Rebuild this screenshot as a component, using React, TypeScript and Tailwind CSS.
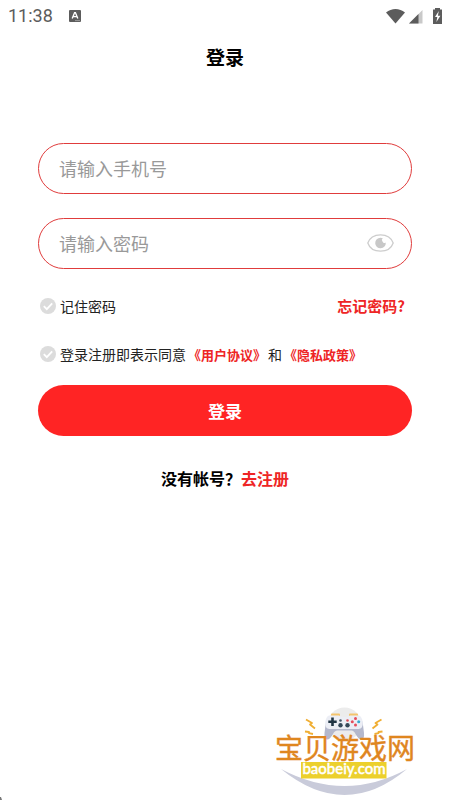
import React, { useState } from 'react';

function StatusBar() {
  return (
    <header className="flex h-8 items-center justify-between px-2 text-[#5c5c5c]">
      <div className="flex items-center gap-4">
        <time className="font-['Roboto',sans-serif] text-lg leading-8">11:38</time>
        <svg className="h-3 w-3" viewBox="0 0 12 12" aria-hidden="true">
          <rect width="12" height="12" rx="1" fill="#5c5c5c" />
          <path d="M3.2 8.4 5.6 2.6h.8l2.4 5.8M4.1 6.6h3.8" fill="none" stroke="#fff" strokeWidth="1.4" />
          <path d="M6 10.6h5" stroke="#aaa" strokeWidth=".8" />
        </svg>
      </div>
      <svg className="h-[18px] w-[57px]" viewBox="0 0 57 18" aria-hidden="true">
        <path d="M1 5.4C6.5.7 14.5.7 20 5.4L10.5 16.5Z" fill="#5c5c5c" />
        <path d="M24 16.5 37.5 3v13.5Z" fill="#c9c9c9" />
        <path d="M24 16.5 33.5 7v9.5Z" fill="#5c5c5c" />
        <path d="M50 1h5v1.5h2V17h-9V2.5h2Z" fill="#5c5c5c" />
        <path d="m53.8 4-3.8 6h2.3l-.9 5 4-6.3h-2.5Z" fill="#fff" />
      </svg>
    </header>
  );
}

function EyeIcon() {
  return (
    <svg className="h-[18px] w-[27px]" viewBox="0 0 27 18" aria-hidden="true">
      <path
        d="M.8 9C2.6 3.8 7.5.8 13.5.8S24.4 3.800 26.2 9c-1.800 5.200-6.700 8.200-12.700 8.200S2.600 14.200.8 9Z"
        fill="none"
        stroke="#cdcdcd"
        strokeWidth="1.3"
      />
      <path d="M13.5 3.7a5.300 5.300 0 1 0 5.300 4.900 2.300 2.300 0 0 1-3.300-1 2.300 2.300 0 0 1 .3-3.300 5.300 5.300 0 0 0-2.300-.6Z" fill="#c8c8c8" />
    </svg>
  );
}

function RoundCheck({ id }: { id: string }) {
  return (
    <span className="grid h-4 w-4 shrink-0 place-items-center">
      <input
        id={id}
        type="checkbox"
        className="col-start-1 row-start-1 h-4 w-4 appearance-none rounded-full bg-[#dcdcdc] checked:bg-[#ff2424]"
      />
      <svg className="pointer-events-none col-start-1 row-start-1 h-4 w-4" viewBox="0 0 16 16" aria-hidden="true">
        <path d="m3.8 8.2 3 3 5.400-5.800" fill="none" stroke="#fff" strokeWidth="1.8" />
      </svg>
    </span>
  );
}

function SiteLogo() {
  return (
    <svg className="absolute right-7 bottom-0 h-[96px] w-[150px]" viewBox="272 704 150 96" role="img" aria-label="宝贝游戏网">
      <path d="M281 769Q345 821 407 769Q345 803 281 769Z" fill="#c9cbda" />
      <circle cx="344.5" cy="724" r="16.5" fill="#ececec" />
      <path
        d="M330 717h29q3 1 4 8l1 8q.5 6-2.500 6.500-3 0-6-5.500-1.500-3.500-4-3.500h-14q-3 0-4.500 3.500-3 5.500-6 5.500-3-.5-2.500-6.500l1-8q1-7 4.500-8Z"
        fill="#b4b8cc"
      />
      <path d="M331 716.5v-2q0-1 1-1h7q1 0 1 1v2ZM349 716.5v-2q0-1 1-1h7q1 0 1 1v2Z" fill="#f4c46c" />
      <path
        d="M330 715.5h9q2 1.500 5.500 1.500t5.500-1.500h9q3 1 3.800 7 .4 6-4.300 6.500h-29q-4.700-.5-4.300-6.500.8-6 3.800-7Z"
        fill="#eceef5"
      />
      <path d="M331.2 717.5h2.600v2.900h2.900v2.600h-2.900v2.900h-2.600V723h-2.900v-2.600h2.900Z" fill="#203544" />
      <circle cx="340.5" cy="720.5" r="1.3" fill="#455666" />
      <circle cx="347.5" cy="720.5" r="1.3" fill="#dc4c56" />
      <circle cx="340.5" cy="725.3" r="2.2" fill="#344858" />
      <circle cx="347.5" cy="725.3" r="2.2" fill="#344858" />
      <circle cx="355.5" cy="718.5" r="1.5" fill="#e64d5c" />
      <circle cx="355.5" cy="725" r="1.5" fill="#e64d5c" />
      <circle cx="352.3" cy="721.8" r="1.5" fill="#e64d5c" />
      <circle cx="358.7" cy="721.8" r="1.5" fill="#38a9cf" />
      <g fill="none" stroke="#f0ae32" strokeWidth="1.8" strokeLinejoin="round">
        <path d="m306 719.5 6 3.500-2 1.500 5 4" />
        <path d="m305 731.5 4 .5v1.200l4 .8" />
        <path d="m381.5 719.5-6 3.500 2 1.500-5 4" />
        <path d="m382.5 731.5-4 .5v1.200l-4 .8" />
      </g>
      <text
        x="275"
        y="759"
        fill="#df861f"
        stroke="#df861f"
        strokeWidth=".4"
        className="font-['Noto_Sans_CJK_SC',sans-serif] text-[28px]"
      >
        宝贝游戏网
      </text>
      <rect x="301" y="762" width="85.5" height="16.5" fill="#ecd02c" />
      <text
        x="344"
        y="774"
        textAnchor="middle"
        fill="#fff"
        stroke="#fff"
        strokeWidth=".4"
        className="font-['Lato',sans-serif] text-[15px] font-medium"
      >
        baobeiy.com
      </text>
    </svg>
  );
}

export default function App() {
  const [visible, setVisible] = useState(false);
  return (
    <div className="relative min-h-screen bg-white font-['Noto_Sans_CJK_SC',sans-serif] text-black">
      <StatusBar />
      <h1 className="flex h-[50px] items-center justify-center text-[19px] font-bold">登录</h1>
      <main className="px-[38px] pt-[61px]">
        <form onSubmit={(e) => e.preventDefault()}>
          <div className="flex h-[51px] items-center rounded-full border border-[#e03c3c] px-5 pb-0.5">
            <input
              type="tel"
              aria-label="手机号"
              placeholder="请输入手机号"
              className="w-full min-w-0 flex-1 text-lg outline-none placeholder:text-[#999]"
            />
          </div>
          <div className="mt-6 flex h-[51px] items-center rounded-full border border-[#e03c3c] pr-[17px] pb-0.5 pl-5">
            <input
              type={visible ? 'text' : 'password'}
              aria-label="密码"
              placeholder="请输入密码"
              className="w-full min-w-0 flex-1 text-lg outline-none placeholder:text-[#999]"
            />
            <button type="button" aria-label="显示密码" onClick={() => setVisible(!visible)}>
              <EyeIcon />
            </button>
          </div>
          <div className="mt-[25px] flex h-6 items-center justify-between pr-[7px] pl-0.5">
            <div className="flex items-center gap-1">
              <RoundCheck id="remember" />
              <label htmlFor="remember" className="text-sm text-[#222]">记住密码</label>
            </div>
            <a href="#forgot" className="text-[15px] font-bold text-[#ee2525]">忘记密码?</a>
          </div>
          <div className="mt-6 flex h-6 items-center gap-1 pl-0.5">
            <RoundCheck id="agree" />
            <p className="text-sm whitespace-nowrap text-[#222]">
              <label htmlFor="agree">登录注册即表示同意</label>
              <a href="#terms" className="mx-0.5 text-[13px] font-bold text-[#ee2525]">《用户协议》</a>和
              <a href="#privacy" className="mx-0.5 text-[13px] font-bold text-[#ee2525]">《隐私政策》</a>
            </p>
          </div>
          <button type="submit" className="mt-[19px] h-[51px] w-full rounded-full bg-[#ff2424] text-[17px] font-bold text-white">
            登录
          </button>
        </form>
        <p className="mt-[30px] text-center text-base font-bold">
          没有帐号？<a href="#register" className="text-[#ee2525]">去注册</a>
        </p>
      </main>
      <SiteLogo />
      <svg className="absolute bottom-0 left-0 h-[3px] w-0.5" viewBox="0 0 2 3" aria-hidden="true">
        <path d="M0 0h1l1 3H0Z" fill="#777" />
      </svg>
    </div>
  );
}
